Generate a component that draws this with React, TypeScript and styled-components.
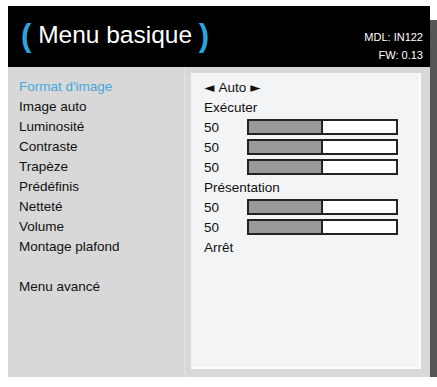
import React from 'react';
import styled, {createGlobalStyle} from 'styled-components';

const GlobalStyle = createGlobalStyle`
  *, *::before, *::after {
    box-sizing: border-box;
  }
  html, body {
    margin: 0;
    padding: 0;
    background: #ffffff;
  }
  body {
    padding: 6px 0 0 8px;
    font-family: "Liberation Sans", Arial, sans-serif;
  }
`;

type Row = {
  label: string;
  value?: string;
  level?: number;
  selector?: boolean;
};

const rows: Row[] = [
  {label: "Format d'image", value: 'Auto', selector: true},
  {label: 'Image auto', value: 'Exécuter'},
  {label: 'Luminosité', value: '50', level: 50},
  {label: 'Contraste', value: '50', level: 50},
  {label: 'Trapèze', value: '50', level: 50},
  {label: 'Prédéfinis', value: 'Présentation'},
  {label: 'Netteté', value: '50', level: 50},
  {label: 'Volume', value: '50', level: 50},
  {label: 'Montage plafond', value: 'Arrêt'},
];

const App: React.FC = () => {
  return (
    <>
      <GlobalStyle />
      <Frame>
        <Header>
          <Title>
            <Paren>(</Paren> Menu basique <Paren>)</Paren>
          </Title>
          <Info>
            <span>MDL: IN122</span>
            <span>FW: 0.13</span>
          </Info>
        </Header>
        <Body>
          <Labels>
            {rows.map((row, i) => (
              <Label key={row.label} active={i === 0}>
                {row.label}
              </Label>
            ))}
            <Spacer />
            <Label>Menu avancé</Label>
          </Labels>
          <Values>
            {rows.map((row) => (
              <ValueRow key={row.label}>
                {row.selector ? (
                  <Selector>
                    <Arrow>◄</Arrow>
                    {row.value}
                    <Arrow>►</Arrow>
                  </Selector>
                ) : row.level !== undefined ? (
                  <>
                    <Number>{row.value}</Number>
                    <Bar>
                      <Fill style={{width: `${row.level}%`}} />
                    </Bar>
                  </>
                ) : (
                  row.value
                )}
              </ValueRow>
            ))}
          </Values>
        </Body>
      </Frame>
    </>
  );
};

export default App;

const Frame = styled.div`
  width: 422px;
  height: 371px;
  background: #d8d8d8;
  box-shadow: 8px 14px 0 #555555;
  display: flex;
  flex-direction: column;
`;

const Header = styled.div`
  height: 61px;
  flex-shrink: 0;
  background: #000000;
  display: flex;
  align-items: stretch;
  justify-content: space-between;
  padding: 0 7px 0 13px;
`;

const Title = styled.div`
  display: flex;
  align-items: center;
  color: #ffffff;
  font-size: 24.5px;
  white-space: pre;
  padding-bottom: 3px;
`;

const Paren = styled.span`
  color: #2aa3de;
  font-size: 31px;
  font-weight: bold;
  position: relative;
  top: 1px;
`;

const Info = styled.div`
  display: flex;
  flex-direction: column;
  justify-content: flex-end;
  align-items: flex-end;
  padding-bottom: 3px;
  color: #ffffff;
  font-size: 11px;
  line-height: 18px;
`;

const Body = styled.div`
  flex: 1;
  display: flex;
  padding-right: 9px;
`;

const Labels = styled.div`
  width: 177px;
  flex-shrink: 0;
  padding: 10px 0 0 11px;
  margin-right: 6px;
  border-right: 1px solid #e2e2e2;
`;

const Label = styled.div<{active?: boolean}>`
  height: 20px;
  line-height: 20px;
  font-size: 13.5px;
  color: ${({active}) => (active ? '#45a7dd' : '#111111')};
  white-space: nowrap;
`;

const Spacer = styled.div`
  height: 20px;
`;

const Values = styled.div`
  flex: 1;
  margin: 6px 0 8px;
  background: #f3f4f6;
  border-right: 2px solid #fbfbfb;
  border-bottom: 2px solid #fbfbfb;
  padding: 4px 0 0 13px;
`;

const ValueRow = styled.div`
  height: 20px;
  display: flex;
  align-items: center;
  font-size: 13.5px;
  color: #111111;
  white-space: nowrap;
`;

const Selector = styled.span`
  display: inline-flex;
  align-items: center;
  gap: 4px;
`;

const Arrow = styled.span`
  font-family: "DejaVu Sans", sans-serif;
  font-size: 13.5px;
`;

const Number = styled.span`
  width: 43px;
  flex-shrink: 0;
`;

const Bar = styled.div`
  width: 151px;
  height: 16px;
  border: 2px solid #222222;
  background: #ffffff;
  display: flex;
`;

const Fill = styled.div`
  height: 100%;
  background: #999999;
  border-right: 2px solid #222222;
`;
